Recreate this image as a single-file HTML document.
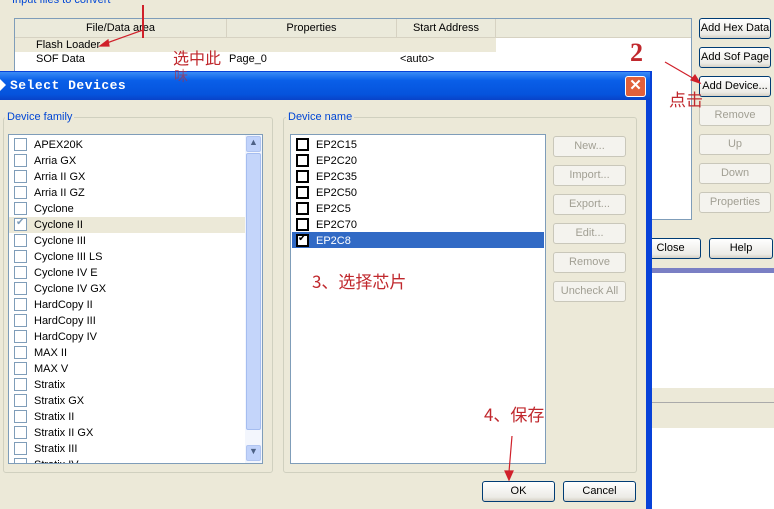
<!DOCTYPE html>
<html><head><meta charset="utf-8"><style>
*{box-sizing:border-box;margin:0;padding:0}
body{width:774px;height:509px;overflow:hidden;background:#ece9d8;position:relative;font-family:Tahoma,"Liberation Sans","Noto Sans CJK SC",sans-serif;font-size:11px;color:#000}
.a{position:absolute}
.btn{position:absolute;border:1px solid #003c74;border-radius:3px;background:linear-gradient(#fff,#ecebe6 80%,#d6d0c5);text-align:center;font-size:11px;line-height:19px}
.dis{border-color:#c9c7ba;color:#a19f93;background:#f4f3ee}
.row{position:absolute;height:16px;line-height:16px;white-space:nowrap}
.cb{position:absolute;width:13px;height:13px;border:1px solid #1c5180;background:#fff;top:1px}
.cbg{border-color:#7f9db9}
.red{position:absolute;color:#c0282d;font-family:"Noto Sans CJK SC","WenQuanYi Zen Hei",sans-serif}
</style></head><body>
<div class="a" style="left:12px;top:-6px;color:#0046d5;font-size:11px">Input files to convert</div>
<div class="a" style="left:14px;top:18px;width:678px;height:202px;background:#fff;border:1px solid #7f9db9"></div>
<div class="a" style="left:15px;top:19px;width:676px;height:19px;background:#ebeadb;border-bottom:1px solid #d6d2c2"></div>
<div class="a" style="left:15px;top:22px;width:211px;text-align:center">File/Data area</div>
<div class="a" style="left:226px;top:19px;width:170px;height:19px;border-left:1px solid #d6d2c2;text-align:center;line-height:19px">Properties</div>
<div class="a" style="left:396px;top:19px;width:100px;height:19px;border-left:1px solid #d6d2c2;border-right:1px solid #d6d2c2;text-align:center;line-height:19px">Start Address</div>
<div class="a" style="left:15px;top:38px;width:481px;height:14px;background:#ece9d8"></div>
<div class="a" style="left:36px;top:39px">Flash Loader</div>
<div class="a" style="left:36px;top:53px">SOF Data</div>
<div class="a" style="left:229px;top:53px">Page_0</div>
<div class="a" style="left:400px;top:53px">&lt;auto&gt;</div>
<div class="btn" style="left:699px;top:18px;width:72px;height:21px">Add Hex Data</div>
<div class="btn" style="left:699px;top:47px;width:72px;height:21px">Add Sof Page</div>
<div class="btn" style="left:699px;top:76px;width:72px;height:21px">Add Device...</div>
<div class="btn dis" style="left:699px;top:105px;width:72px;height:21px">Remove</div>
<div class="btn dis" style="left:699px;top:134px;width:72px;height:21px">Up</div>
<div class="btn dis" style="left:699px;top:163px;width:72px;height:21px">Down</div>
<div class="btn dis" style="left:699px;top:192px;width:72px;height:21px">Properties</div>
<div class="btn" style="left:640px;top:238px;width:61px;height:21px">Close</div>
<div class="btn" style="left:709px;top:238px;width:64px;height:21px">Help</div>
<div class="a" style="left:652px;top:268px;width:122px;height:5px;background:#7a7fc4"></div>
<div class="a" style="left:652px;top:273px;width:122px;height:115px;background:#fff"></div>
<div class="a" style="left:652px;top:402px;width:122px;height:26px;background:#ece9d8;border-top:1px solid #aaa"></div>
<div class="a" style="left:652px;top:428px;width:122px;height:81px;background:#fff"></div>
<div class="a" style="left:0;top:71px;width:652px;height:438px;background:#0842d8"></div>
<div class="a" style="left:0;top:72px;width:650px;height:28px;background:linear-gradient(#3a8cf6,#0a5fe8 30%,#0553dc 80%,#0842c8)"></div>
<div class="a" style="left:0;top:79px;width:0;height:0;border:6px solid transparent;border-left-color:#fff"></div>
<div class="a" style="left:10px;top:78px;color:#fff;font-family:'Liberation Mono',monospace;font-weight:bold;font-size:13px;letter-spacing:0.5px">Select Devices</div>
<div class="a" style="left:625px;top:76px;width:21px;height:21px;border:1px solid #fff;border-radius:3px;background:#e0603a;color:#fff;text-align:center;font-weight:bold;font-size:15px;line-height:18px">✕</div>
<div class="a" style="left:0;top:100px;width:646px;height:409px;background:#ece9d8"></div>
<div class="a" style="left:3px;top:117px;width:270px;height:356px;border:1px solid #d0d0bf;border-radius:3px"></div>
<div class="a" style="left:5px;top:111px;background:#ece9d8;color:#0046d5;padding:0 2px">Device family</div>
<div class="a" style="left:8px;top:134px;width:255px;height:330px;background:#fff;border:1px solid #7f9db9;overflow:hidden">
<div class="a" style="left:0;top:82px;width:236px;height:16px;background:#ece9d8"></div>
<div id="fam"></div>
<div class="a" style="left:236px;top:0;width:17px;height:328px;background:#f3f6fd"></div>
<div class="a" style="left:237px;top:1px;width:15px;height:16px;background:#c1d3fb;border:1px solid #b0c4f0;border-radius:2px;font-size:9px;text-align:center;color:#4d6185">▲</div>
<div class="a" style="left:237px;top:18px;width:15px;height:277px;background:#c4d5fa;border:1px solid #a5bdf0;border-radius:2px"></div>
<div class="a" style="left:237px;top:310px;width:15px;height:16px;background:#c1d3fb;border:1px solid #b0c4f0;border-radius:2px;font-size:9px;text-align:center;color:#4d6185">▼</div>
</div>
<div class="a" style="left:283px;top:117px;width:354px;height:356px;border:1px solid #d0d0bf;border-radius:3px"></div>
<div class="a" style="left:286px;top:111px;background:#ece9d8;color:#0046d5;padding:0 2px">Device name</div>
<div class="a" style="left:290px;top:134px;width:256px;height:330px;background:#fff;border:1px solid #7f9db9"></div>
<div class="a" style="left:292px;top:232px;width:252px;height:16px;background:#316ac5"></div>
<div id="dev"></div>
<div class="btn dis" style="left:553px;top:136px;width:73px;height:21px">New...</div>
<div class="btn dis" style="left:553px;top:165px;width:73px;height:21px">Import...</div>
<div class="btn dis" style="left:553px;top:194px;width:73px;height:21px">Export...</div>
<div class="btn dis" style="left:553px;top:223px;width:73px;height:21px">Edit...</div>
<div class="btn dis" style="left:553px;top:252px;width:73px;height:21px">Remove</div>
<div class="btn dis" style="left:553px;top:281px;width:73px;height:21px">Uncheck All</div>
<div class="btn" style="left:482px;top:481px;width:73px;height:21px">OK</div>
<div class="btn" style="left:563px;top:481px;width:73px;height:21px">Cancel</div>
<div class="red" style="left:173px;top:45px;font-size:16px">选中此</div>
<div class="red" style="left:174px;top:66px;font-size:14px;opacity:.6">味</div>
<div class="red" style="left:669px;top:86px;font-size:17px">点击</div>
<div class="red" style="left:312px;top:268px;font-size:17px">3、选择芯片</div>
<div class="red" style="left:484px;top:401px;font-size:17px">4、保存</div>
<div class="red" style="left:630px;top:38px;font-size:26px;font-family:'Liberation Serif',serif;font-weight:bold">2</div>
<svg class="a" style="left:0;top:0" width="774" height="509">
<g stroke="#d0202a" stroke-width="1.2" fill="#d0202a">
<line x1="143" y1="5" x2="143" y2="38" stroke-width="2"/>
<line x1="143" y1="30" x2="104" y2="44"/><polygon points="100,46 108,40 109,46"/>
<line x1="665" y1="62" x2="696" y2="80"/><polygon points="700,83 691,80 695,75"/>
<line x1="512" y1="436" x2="509" y2="472"/><polygon points="509,480 505,471 513,471"/>
</g></svg>
<script>
var f=["APEX20K","Arria GX","Arria II GX","Arria II GZ","Cyclone","Cyclone II","Cyclone III","Cyclone III LS","Cyclone IV E","Cyclone IV GX","HardCopy II","HardCopy III","HardCopy IV","MAX II","MAX V","Stratix","Stratix GX","Stratix II","Stratix II GX","Stratix III","Stratix IV"],h="";
f.forEach(function(n,i){var y=2+i*16;h+='<div class="cb cbg" style="left:5px;top:'+(y+1)+'px;">'+(i==5?'<span style="color:#7f9db9;font-size:10px;position:absolute;left:1px;top:-2px">✔</span>':'')+'</div><div class="row" style="left:25px;top:'+y+'px;">'+n+'</div>';});
document.getElementById('fam').innerHTML=h;
var d=["EP2C15","EP2C20","EP2C35","EP2C50","EP2C5","EP2C70","EP2C8"];h="";
d.forEach(function(n,i){var y=137+i*16;h+='<div class="cb" style="left:296px;top:'+(y+1)+'px;border:2px solid #000">'+(i==6?'<span style="font-size:10px;position:absolute;left:0;top:-3px">✔</span>':'')+'</div><div class="row" style="left:316px;top:'+y+'px;'+(i==6?'color:#fff':'')+'">'+n+'</div>';});
document.getElementById('dev').innerHTML=h;
</script>
</body></html>
